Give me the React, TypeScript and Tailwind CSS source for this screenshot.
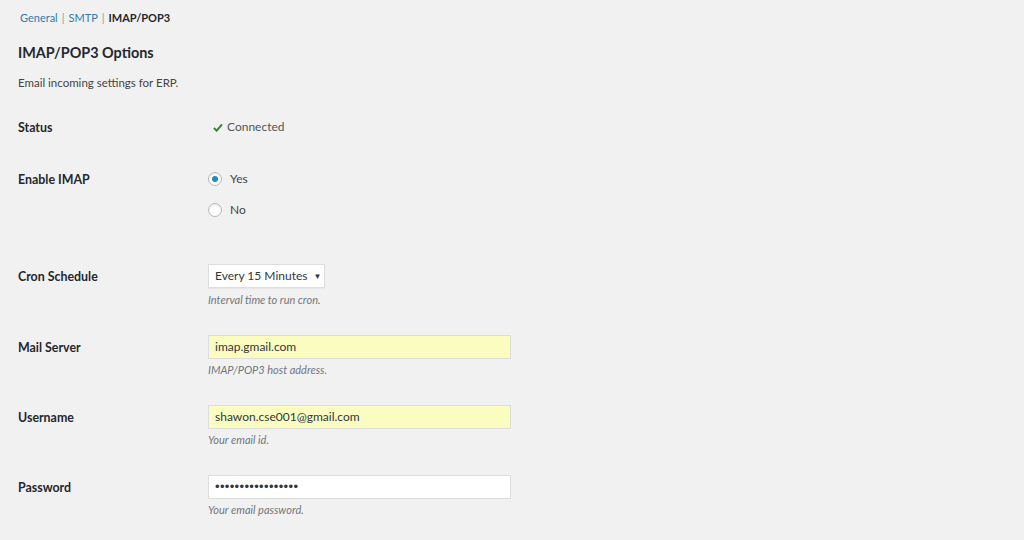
import React from 'react'

const font = { fontFamily: 'Lato, "Noto Sans", Arial, sans-serif' }

function Row({ label, children }: { label: string; children: React.ReactNode }) {
  return (
    <div className="flex items-start">
      <div className="h-[24px] w-[190px] shrink-0 text-[12.4px] font-bold leading-[26px] text-[#23282d]">{label}</div>
      <div className="flex flex-col">{children}</div>
    </div>
  )
}

function Desc({ children }: { children: React.ReactNode }) {
  return <p className="mt-[3px] text-[11px] italic leading-[16px] text-[#72777c]">{children}</p>
}

function Radio({ checked, label }: { checked?: boolean; label: string }) {
  return (
    <label className="flex items-center gap-[8px] text-[12px] leading-[20px] text-[#444]">
      <span className="flex h-[14px] w-[14px] items-center justify-center rounded-full border border-[#b4b9be] bg-white shadow-[inset_0_1px_2px_rgba(0,0,0,0.1)]">
        {checked && <span className="h-[6px] w-[6px] rounded-full bg-[#1e8cbe]" />}
      </span>
      {label}
    </label>
  )
}

export default function App() {
  return (
    <div className="min-h-screen w-full bg-[#f1f1f1] px-[18px] text-[#23282d]" style={font}>
      {/* Tabs */}
      <div className="pt-[10px] text-[11px] leading-[16px]">
        <a className="ml-[2px] text-[#2e7dab]">General</a>
        <span className="mx-[4px] text-[#999]">|</span>
        <a className="text-[#2e7dab]">SMTP</a>
        <span className="mx-[4px] text-[#999]">|</span>
        <span className="font-bold text-[#23282d]">IMAP/POP3</span>
      </div>

      <h2 className="mt-[17px] text-[14.4px] font-bold leading-[20px] text-[#23282d]">IMAP/POP3 Options</h2>
      <p className="mt-[11px] text-[11.5px] leading-[18px] text-[#444]">Email incoming settings for ERP.</p>

      <div className="mt-[23px] flex flex-col">
        <Row label="Status">
          <div className="flex items-center gap-[4px] text-[12px] leading-[24px] text-[#555]">
            <svg width="10" height="9" viewBox="0 0 11 10" className="ml-[5px]">
              <path d="M1 5.5 L4 8.5 L10 1.5" fill="none" stroke="#2e8b2e" strokeWidth="2.2" />
            </svg>
            Connected
          </div>
        </Row>

        <div className="mt-[28px]">
          <Row label="Enable IMAP">
            <div className="flex flex-col gap-[11px] pt-[2px]">
              <Radio checked label="Yes" />
              <Radio label="No" />
            </div>
          </Row>
        </div>

        <div className="mt-[44px]">
          <Row label="Cron Schedule">
            <div className="flex h-[24px] w-[117px] items-center gap-[6px] whitespace-nowrap border border-[#ddd] bg-white pl-[6px] text-[12px] text-[#32373c] shadow-[0_1px_1px_rgba(0,0,0,0.04)]">
              <span>Every 15 Minutes</span>
              <span className="text-[8px]">▼</span>
            </div>
            <p className="mt-[4px] text-[11px] italic leading-[16px] text-[#72777c]">Interval time to run cron.</p>
          </Row>
        </div>

        <div className="mt-[27px]">
          <Row label="Mail Server">
            <div className="flex h-[24px] w-[303px] items-center border border-[#ddd] bg-[#fafcc0] px-[6px] text-[12px] text-[#32373c]">imap.gmail.com</div>
            <Desc>IMAP/POP3 host address.</Desc>
          </Row>
        </div>

        <div className="mt-[27px]">
          <Row label="Username">
            <div className="flex h-[24px] w-[303px] items-center border border-[#ddd] bg-[#fafcc0] px-[6px] text-[12px] text-[#32373c]">shawon.cse001@gmail.com</div>
            <Desc>Your email id.</Desc>
          </Row>
        </div>

        <div className="mt-[27px]">
          <Row label="Password">
            <div className="flex h-[24px] w-[303px] items-center border border-[#ddd] bg-white px-[6px] text-[13px] tracking-[0.35px] text-[#32373c]" style={{ fontFamily: 'Arial, sans-serif' }}>•••••••••••••••••</div>
            <Desc>Your email password.</Desc>
          </Row>
        </div>
      </div>
    </div>
  )
}
